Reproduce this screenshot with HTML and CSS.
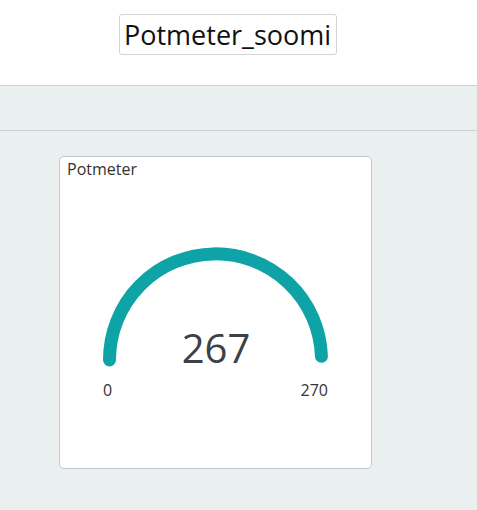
FILE: index.html
```html
<!DOCTYPE html>
<html>
<head>
<meta charset="utf-8">
<link rel="stylesheet" href="styles.css">
</head>
<body>
<header class="header">
  <div class="title-box">Potmeter_soomi</div>
</header>
<div class="toolbar"></div>
<main class="content">
  <section class="card">
    <div class="card-title">Potmeter</div>
    <div class="gauge">
      <svg class="gauge-svg" width="312" height="130" viewBox="0 0 312 130">
        <path d="M 50.5 120 A 106 106 0 0 1 262.44 116.3" fill="none" stroke="#0ea3a6" stroke-width="13" stroke-linecap="round"/>
      </svg>
      <div class="gauge-value">267</div>
      <div class="gauge-labels">
        <span>0</span>
        <span>270</span>
      </div>
    </div>
  </section>
</main>
</body>
</html>
```

FILE: styles.css
```css
html, body {
  margin: 0;
  padding: 0;
}
body {
  background: #eaf0f0;
  font-family: "Open Sans", "Noto Sans", sans-serif;
  color: #333;
  width: 477px;
  height: 510px;
  overflow: hidden;
}
.header {
  background: #fff;
  border-bottom: 1px solid #c9d1d2;
  box-sizing: border-box;
  height: 86px;
  padding-top: 14px;
  padding-left: 119px;
}
.title-box {
  display: inline-block;
  box-sizing: border-box;
  width: 218px;
  height: 41px;
  border: 1px solid #cfd6d7;
  border-radius: 3px;
  font-size: 27px;
  line-height: 39px;
  padding-left: 4px;
  color: #111;
  white-space: nowrap;
  overflow: hidden;
}
.toolbar {
  height: 44px;
  border-bottom: 1px solid #c9d1d2;
}
.content {
  padding-top: 25px;
  padding-left: 59px;
}
.card {
  box-sizing: border-box;
  width: 313px;
  height: 313px;
  background: #fff;
  border: 1px solid #c2cacb;
  border-radius: 5px;
  position: relative;
}
.card-title {
  font-size: 16px;
  line-height: 20px;
  padding: 2px 0 0 7px;
  color: #333;
}
.gauge {
  position: relative;
  height: 280px;
}
.gauge-svg {
  position: absolute;
  left: -1px;
  top: 61px;
}
.gauge-value {
  position: absolute;
  left: 0;
  right: 0;
  top: 145px;
  text-align: center;
  font-size: 40px;
  line-height: 48px;
  color: #3a4147;
  padding-left: 1px;
}
.gauge-labels {
  position: absolute;
  left: 43px;
  width: 225px;
  top: 200px;
  display: flex;
  justify-content: space-between;
  font-size: 16px;
  line-height: 22px;
  color: #333;
}
```
